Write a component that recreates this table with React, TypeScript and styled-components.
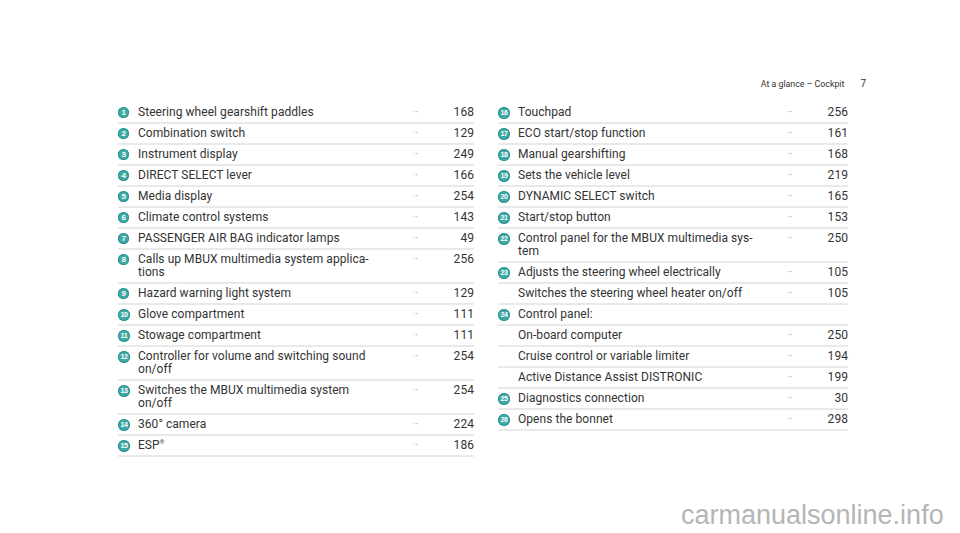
import React from 'react';
import styled, { createGlobalStyle } from 'styled-components';

const Global = createGlobalStyle`
  html, body { margin: 0; padding: 0; background: #fff; }
  body { font-family: Roboto, "Liberation Sans", Arial, sans-serif; color: #333; }
  #root { width: 960px; height: 533px; }
`;

const Page = styled.div`
  position: relative;
  width: 960px;
  height: 533px;
  overflow: hidden;
  box-sizing: border-box;
  padding: 77px 0 0 118px;
`;

const Header = styled.header`
  width: 748px;
  display: flex;
  justify-content: flex-end;
  align-items: baseline;
  gap: 16px;
  font-size: 8.8px;
  line-height: 13px;
  color: #333;
`;

const PageNo = styled.span`
  font-size: 10px;
`;

const Columns = styled.div`
  margin-top: 12px;
  display: grid;
  grid-template-columns: 356px 350px;
  column-gap: 24px;
  align-items: start;
`;

const List = styled.div`
  display: flex;
  flex-direction: column;
`;

const Row = styled.div`
  display: grid;
  grid-template-columns: 20px 1fr 8px 55px;
  align-items: start;
  padding: 3px 0;
  border-bottom: 2px solid #e9e9e9;
  font-size: 12px;
  line-height: 13px;
  letter-spacing: 0.05px;
`;

const BadgeCell = styled.div`
  display: flex;
  align-items: flex-start;
  padding-top: 1px;
`;

const Badge = styled.span<{ $wide?: boolean }>`
  display: inline-flex;
  align-items: center;
  justify-content: center;
  width: ${p => (p.$wide ? '12px' : '11px')};
  height: ${p => (p.$wide ? '12px' : '11px')};
  margin-top: ${p => (p.$wide ? '-0.5px' : '0')};
  border-radius: 50%;
  background: #3ea9a5;
  box-shadow: inset 0 0 0 1px #2e9591;
  color: #fff;
  font-size: ${p => (p.$wide ? '7px' : '8px')};
  font-weight: 700;
  line-height: 1;
  letter-spacing: -0.3px;
  font-family: "Liberation Sans", Arial, sans-serif;
`;

const Label = styled.div``;

const Arrow = styled.span`
  color: #a8a8a8;
  font-size: 8px;
  line-height: 8px;
  margin-top: 1px;
`;

const Num = styled.span`
  text-align: right;
`;

const Sup = styled.sup`
  font-size: 6px;
  vertical-align: top;
  line-height: 6px;
`;

const Watermark = styled.div`
  position: absolute;
  left: 681px;
  top: 499px;
  font-family: "Liberation Sans", Arial, sans-serif;
  font-size: 27px;
  line-height: 32px;
  color: #b5b5b5;
  white-space: nowrap;
`;

type Item = { n?: number; label: React.ReactNode; page?: string };

const left: Item[] = [
  { n: 1, label: 'Steering wheel gearshift paddles', page: '168' },
  { n: 2, label: 'Combination switch', page: '129' },
  { n: 3, label: 'Instrument display', page: '249' },
  { n: 4, label: 'DIRECT SELECT lever', page: '166' },
  { n: 5, label: 'Media display', page: '254' },
  { n: 6, label: 'Climate control systems', page: '143' },
  { n: 7, label: 'PASSENGER AIR BAG indicator lamps', page: '49' },
  { n: 8, label: <>Calls up MBUX multimedia system applica-<br />tions</>, page: '256' },
  { n: 9, label: 'Hazard warning light system', page: '129' },
  { n: 10, label: 'Glove compartment', page: '111' },
  { n: 11, label: 'Stowage compartment', page: '111' },
  { n: 12, label: <>Controller for volume and switching sound<br />on/off</>, page: '254' },
  { n: 13, label: <>Switches the MBUX multimedia system<br />on/off</>, page: '254' },
  { n: 14, label: '360° camera', page: '224' },
  { n: 15, label: <>ESP<Sup>®</Sup></>, page: '186' },
];

const right: Item[] = [
  { n: 16, label: 'Touchpad', page: '256' },
  { n: 17, label: 'ECO start/stop function', page: '161' },
  { n: 18, label: 'Manual gearshifting', page: '168' },
  { n: 19, label: 'Sets the vehicle level', page: '219' },
  { n: 20, label: 'DYNAMIC SELECT switch', page: '165' },
  { n: 21, label: 'Start/stop button', page: '153' },
  { n: 22, label: <>Control panel for the MBUX multimedia sys-<br />tem</>, page: '250' },
  { n: 23, label: 'Adjusts the steering wheel electrically', page: '105' },
  { label: 'Switches the steering wheel heater on/off', page: '105' },
  { n: 24, label: 'Control panel:' },
  { label: 'On-board computer', page: '250' },
  { label: 'Cruise control or variable limiter', page: '194' },
  { label: 'Active Distance Assist DISTRONIC', page: '199' },
  { n: 25, label: 'Diagnostics connection', page: '30' },
  { n: 26, label: 'Opens the bonnet', page: '298' },
];

function Entries({ items }: { items: Item[] }) {
  return (
    <List>
      {items.map((it, i) => (
        <Row key={i}>
          <BadgeCell>{it.n !== undefined && <Badge $wide={it.n >= 10}>{it.n}</Badge>}</BadgeCell>
          <Label>{it.label}</Label>
          <Arrow>{it.page ? '→' : ''}</Arrow>
          <Num>{it.page ?? ''}</Num>
        </Row>
      ))}
    </List>
  );
}

export default function App() {
  return (
    <>
      <Global />
      <Page>
        <Header>
          <span>At a glance – Cockpit</span>
          <PageNo>7</PageNo>
        </Header>
        <Columns>
          <Entries items={left} />
          <Entries items={right} />
        </Columns>
        <Watermark>carmanualsonline.info</Watermark>
      </Page>
    </>
  );
}
